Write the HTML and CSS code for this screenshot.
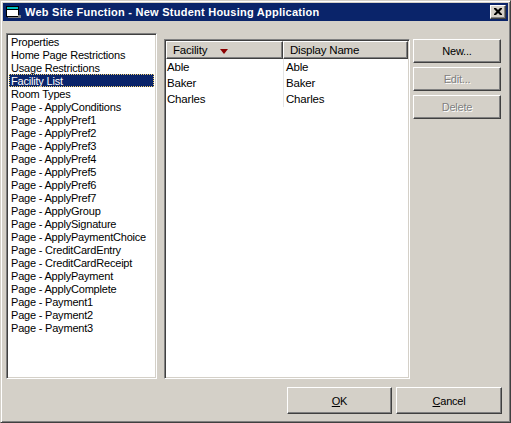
FILE: index.html
```html
<!DOCTYPE html>
<html>
<head>
<meta charset="utf-8">
<link rel="stylesheet" href="styles.css">
</head>
<body>
<div class="window">
  <div class="titlebar">
    <svg class="ticon" width="16" height="16" viewBox="0 0 16 16">
      <rect x="1.5" y="2.5" width="12" height="10" fill="#fff" stroke="#000"/>
      <rect x="2" y="3" width="11" height="2" fill="#00c0c0"/>
      <line x1="2" y1="5.5" x2="13" y2="5.5" stroke="#000"/>
      <rect x="13" y="11" width="3" height="3" fill="#808080"/>
      <rect x="3" y="13" width="11" height="1" fill="#808080"/>
    </svg>
    <span class="title">Web Site Function - New Student Housing Application</span>
    <div class="closebtn">
      <svg width="8" height="7" viewBox="0 0 8 7">
        <path d="M0 0h2l2 2 2-2h2v1l-2.5 2.5L8 6v1H6L4 5 2 7H0V6l2.5-2.5L0 1z" fill="#000"/>
      </svg>
    </div>
  </div>
  <div class="content">
    <div class="main">
      <div class="listbox">
        <div class="item">Properties</div>
        <div class="item">Home Page Restrictions</div>
        <div class="item">Usage Restrictions</div>
        <div class="item selected">Facility List</div>
        <div class="item">Room Types</div>
        <div class="item">Page - ApplyConditions</div>
        <div class="item">Page - ApplyPref1</div>
        <div class="item">Page - ApplyPref2</div>
        <div class="item">Page - ApplyPref3</div>
        <div class="item">Page - ApplyPref4</div>
        <div class="item">Page - ApplyPref5</div>
        <div class="item">Page - ApplyPref6</div>
        <div class="item">Page - ApplyPref7</div>
        <div class="item">Page - ApplyGroup</div>
        <div class="item">Page - ApplySignature</div>
        <div class="item">Page - ApplyPaymentChoice</div>
        <div class="item">Page - CreditCardEntry</div>
        <div class="item">Page - CreditCardReceipt</div>
        <div class="item">Page - ApplyPayment</div>
        <div class="item">Page - ApplyComplete</div>
        <div class="item">Page - Payment1</div>
        <div class="item">Page - Payment2</div>
        <div class="item">Page - Payment3</div>
      </div>
      <div class="grid">
        <div class="ghead">
          <div class="hcell c1">Facility <span class="sort"></span></div>
          <div class="hcell c2">Display Name</div>
        </div>
        <div class="grow"><div class="cell c1">Able</div><div class="cell c2">Able</div></div>
        <div class="grow"><div class="cell c1">Baker</div><div class="cell c2">Baker</div></div>
        <div class="grow"><div class="cell c1">Charles</div><div class="cell c2">Charles</div></div>
      </div>
      <div class="sidebtns">
        <div class="btn">New...</div>
        <div class="btn disabled">Edit...</div>
        <div class="btn disabled">Delete</div>
      </div>
    </div>
    <div class="footer">
      <div class="btn big"><u>O</u>K</div>
      <div class="btn big cancel"><u>C</u>ancel</div>
    </div>
  </div>
</div>
</body>
</html>
```
FILE: styles.css
```css
* { box-sizing: border-box; }
html, body { margin: 0; padding: 0; background: #d4d0c8; }
body {
  font-family: "Liberation Sans", Arial, sans-serif;
  font-size: 11px;
  letter-spacing: -0.2px;
  color: #000;
}
.window {
  width: 511px;
  height: 423px;
  background: #d4d0c8;
  border: 1px solid;
  border-color: #d4d0c8 #404040 #404040 #d4d0c8;
  box-shadow: inset 1px 1px #fff, inset -1px -1px #808080;
  padding: 2px;
}
.titlebar {
  height: 18px;
  background: #0a246a;
  display: flex;
  align-items: center;
  padding-left: 2px;
  padding-right: 2px;
}
.ticon { flex: none; }
.title {
  color: #fff;
  font-weight: bold;
  font-size: 11px;
  letter-spacing: 0.25px;
  margin-left: 4px;
  flex: 1;
  white-space: nowrap;
}
.closebtn {
  width: 16px;
  height: 14px;
  background: #d4d0c8;
  border: 1px solid;
  border-color: #fff #404040 #404040 #fff;
  box-shadow: inset -1px -1px #808080;
  display: flex;
  align-items: center;
  justify-content: center;
  padding-bottom: 1px;
}
.content {
  padding: 12px 0 0 3px;
}
.main {
  display: flex;
  align-items: flex-start;
}
.listbox {
  width: 151px;
  height: 346px;
  background: #fff;
  border: 1px solid;
  border-color: #808080 #fff #fff #808080;
  box-shadow: inset 1px 1px #404040, inset -1px -1px #d4d0c8;
  padding: 1px 2px;
  margin-right: 7px;
}
.item {
  height: 13px;
  line-height: 14px;
  padding-left: 2px;
  white-space: nowrap;
}
.item.selected {
  background: #0a246a;
  color: #fff;
  outline: 1px dotted #f0d070;
  outline-offset: -1px;
}
.grid {
  width: 246px;
  height: 340px;
  margin-top: 6px;
  background: #fff;
  border: 1px solid;
  border-color: #808080 #fff #fff #808080;
  box-shadow: inset 1px 1px #404040, inset -1px -1px #d4d0c8;
  padding: 1px;
}
.ghead {
  display: flex;
  height: 18px;
}
.hcell {
  height: 18px;
  line-height: 16px;
  background: #d4d0c8;
  border: 1px solid;
  border-color: #fff #404040 #404040 #fff;
  box-shadow: inset -1px -1px #808080;
  padding-left: 6px;
  font-size: 11.5px;
  display: flex;
  align-items: center;
  white-space: nowrap;
}
.hcell.c1 { width: 117px; }
.hcell.c2 { flex: 1; }
.sort {
  width: 0;
  height: 0;
  border-left: 4.5px solid transparent;
  border-right: 4.5px solid transparent;
  border-top: 5px solid #8b0000;
  margin-left: 13px;
  margin-top: 2px;
}
.grow {
  display: flex;
  height: 16px;
  line-height: 16px;
}
.cell {
  font-size: 11.5px;
  white-space: nowrap;
}
.cell.c1 { width: 117px; padding-left: 1px; }
.cell.c2 { flex: 1; padding-left: 2px; border-left: 1px solid #e4e4e4; }
.sidebtns {
  display: flex;
  flex-direction: column;
  gap: 4px;
  margin-left: 3px;
  margin-top: 6px;
}
.btn {
  width: 88px;
  height: 24px;
  background: #d4d0c8;
  border: 1px solid;
  border-color: #fff #404040 #404040 #fff;
  box-shadow: inset -1px -1px #808080;
  display: flex;
  align-items: center;
  justify-content: center;
  white-space: nowrap;
}
.btn.disabled {
  color: #808080;
  text-shadow: 1px 1px #fff;
}
.footer {
  display: flex;
  justify-content: flex-end;
  gap: 4px;
  margin-top: 8px;
  padding-right: 6px;
}
.btn.big {
  width: 105px;
  height: 27px;
}
.btn.cancel { width: 106px; }
```
